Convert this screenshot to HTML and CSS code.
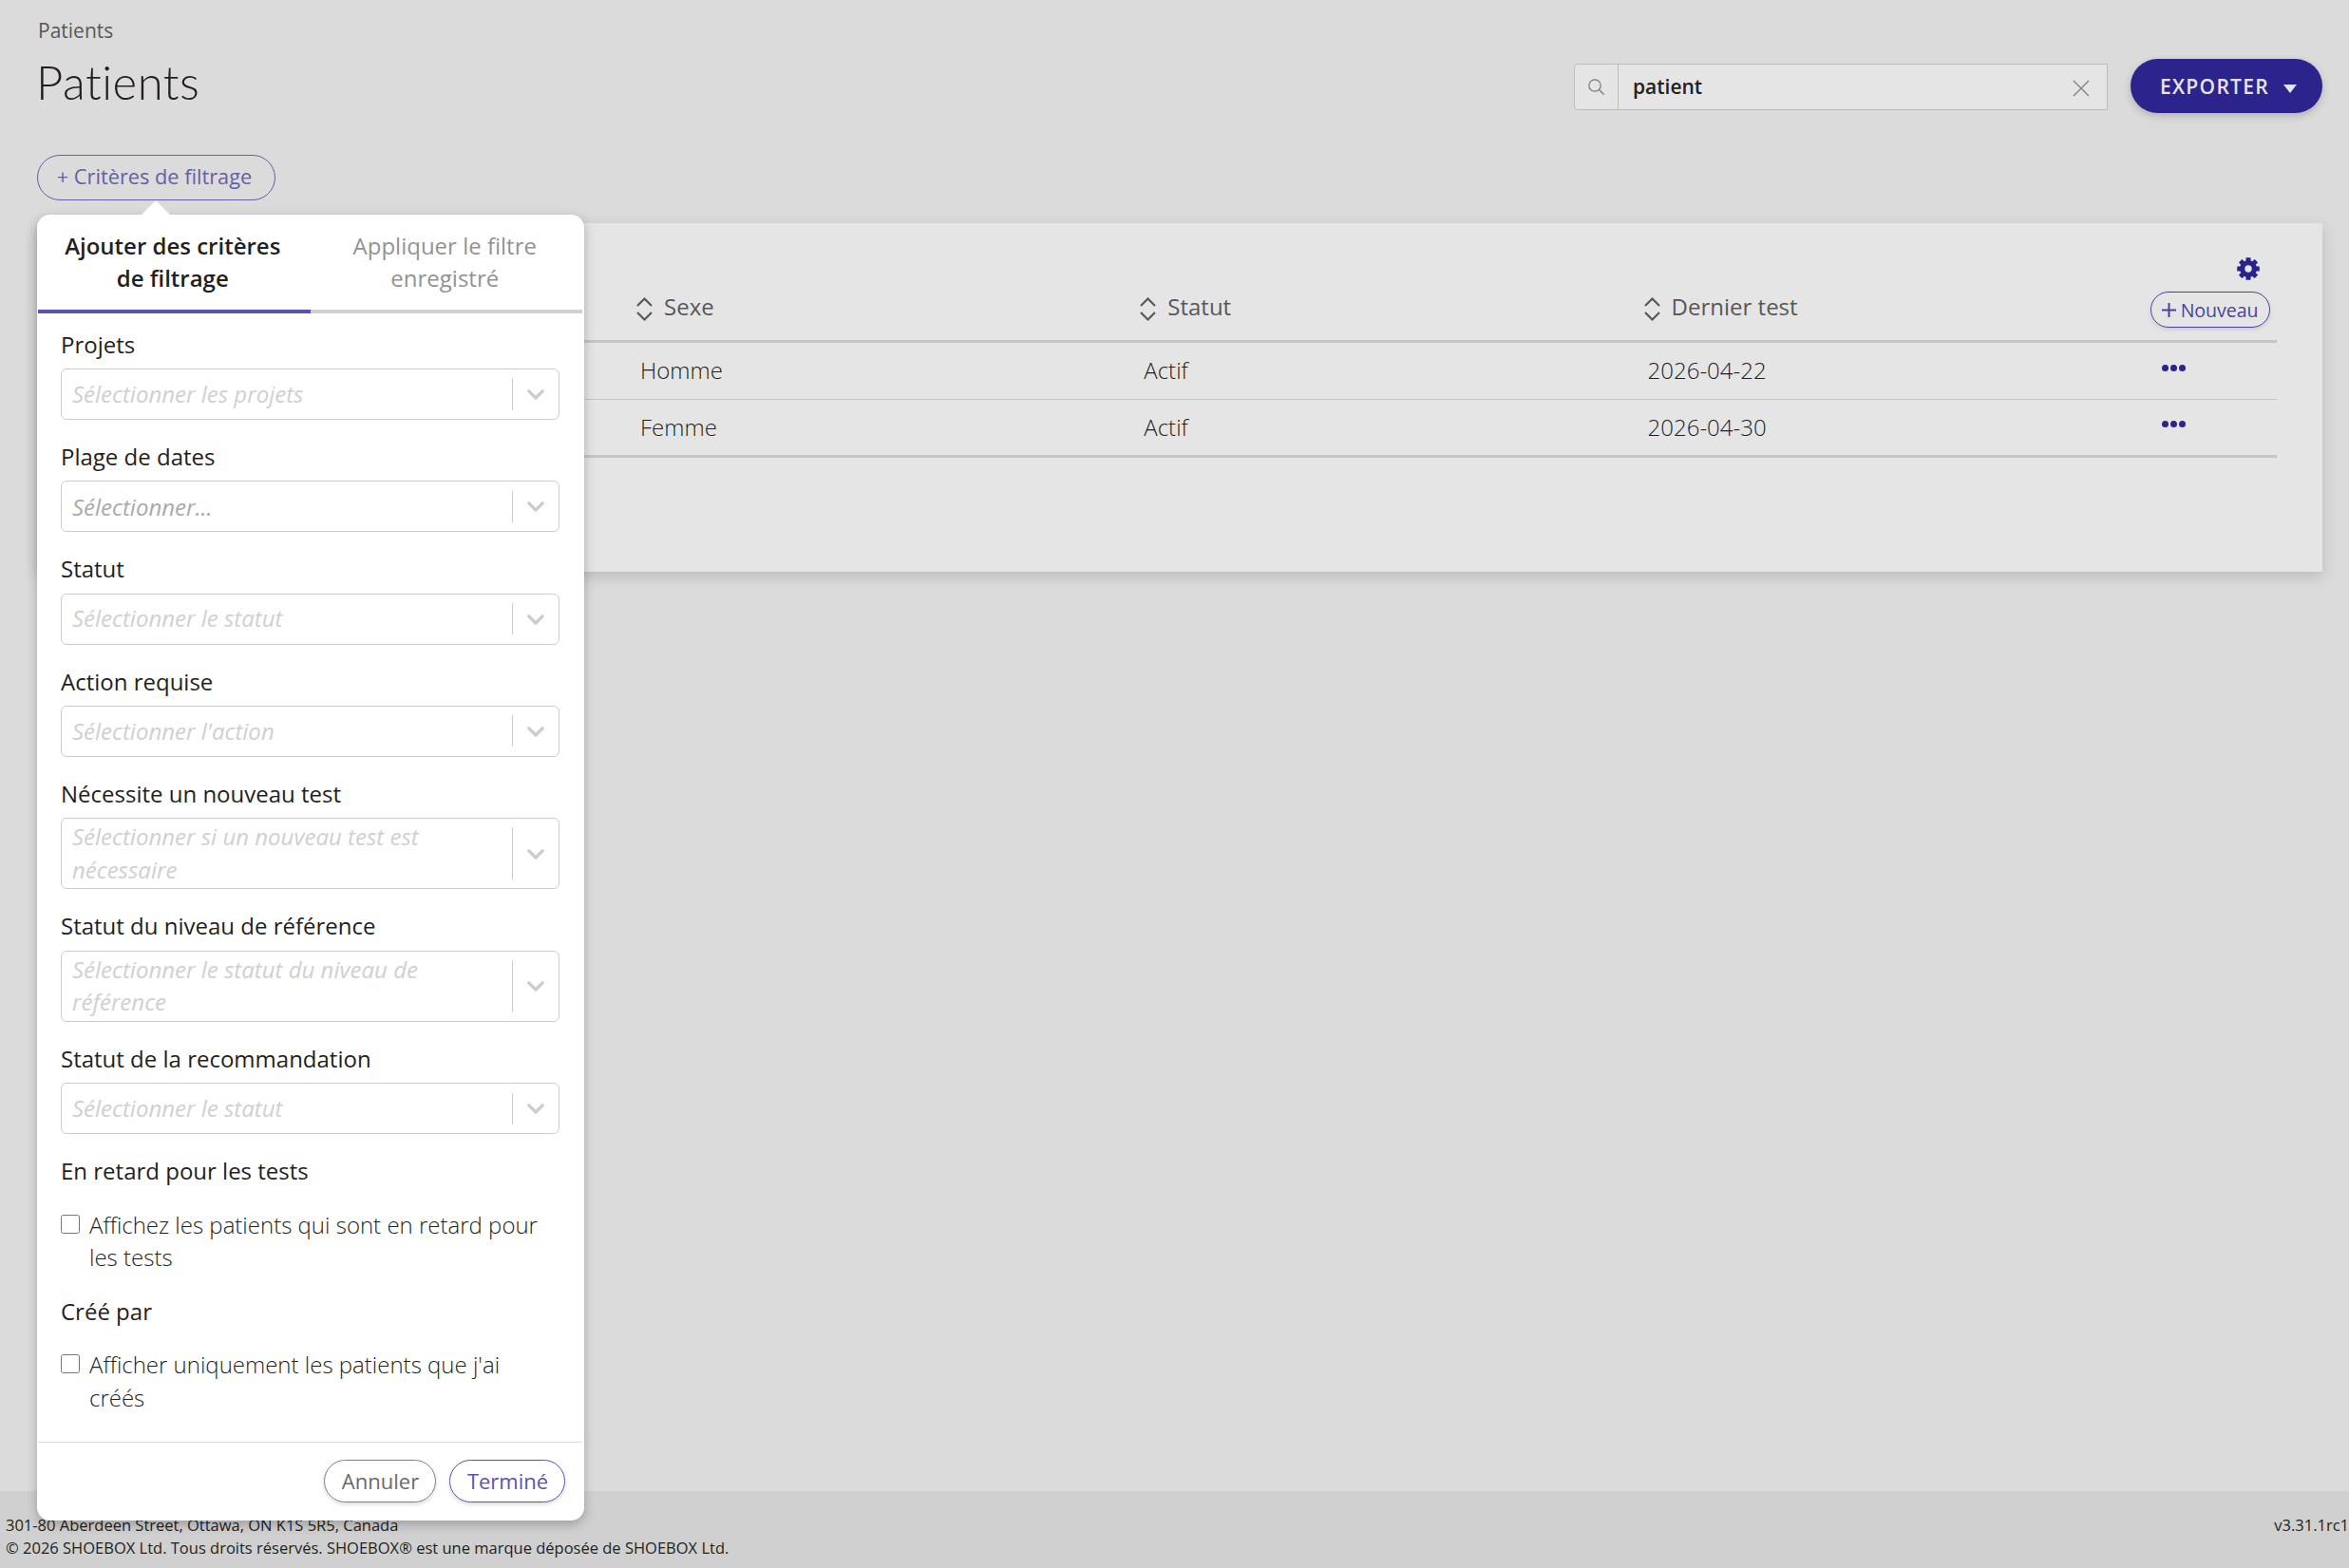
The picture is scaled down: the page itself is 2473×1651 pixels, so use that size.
FILE: index.html
```html
<!DOCTYPE html>
<html lang="fr">
<head>
  <meta charset="UTF-8">
  <meta name="viewport" content="width=device-width, initial-scale=1.0">
  <title>Patients</title>
  <link rel="stylesheet" href="styles.css">
</head>
<body>
  <main>
    <header class="page-header">
      <div>
        <div class="breadcrumb">Patients</div>
        <h1>Patients</h1>
      </div>
      <div class="tools">
        <div class="search">
          <span class="search-icon">
            <svg width="17" height="17" viewBox="0 0 17 17"><circle cx="7" cy="7" r="6.2"/><path d="M11.500 11.500l5 5"/></svg>
          </span>
          <input type="text" value="patient">
          <svg class="clear" width="18" height="18" viewBox="0 0 18 18"><path d="M1 1l16 16M17 1L1 17"/></svg>
        </div>
        <button class="btn-export">EXPORTER <span class="caret"></span></button>
      </div>
    </header>

    <div class="filter-bar">
      <button class="btn-filter">+ Critères de filtrage</button>

      <div class="popup">
        <div class="tabs">
          <div class="tab active">Ajouter des critères de filtrage</div>
          <div class="tab">Appliquer le filtre enregistré</div>
        </div>
        <div class="fields">
          <div class="field">
            <label>Projets</label>
            <div class="select"><span>Sélectionner les projets</span><i><svg viewBox="0 0 18 11"><path d="M1.800 1.800L9 9l7.200-7.200"/></svg></i></div>
          </div>
          <div class="field">
            <label>Plage de dates</label>
            <div class="select dates"><span>Sélectionner...</span><i><svg viewBox="0 0 18 11"><path d="M1.800 1.800L9 9l7.200-7.200"/></svg></i></div>
          </div>
          <div class="field">
            <label>Statut</label>
            <div class="select"><span>Sélectionner le statut</span><i><svg viewBox="0 0 18 11"><path d="M1.800 1.800L9 9l7.200-7.200"/></svg></i></div>
          </div>
          <div class="field">
            <label>Action requise</label>
            <div class="select"><span>Sélectionner l'action</span><i><svg viewBox="0 0 18 11"><path d="M1.800 1.800L9 9l7.200-7.200"/></svg></i></div>
          </div>
          <div class="field">
            <label>Nécessite un nouveau test</label>
            <div class="select"><span>Sélectionner si un nouveau test est nécessaire</span><i><svg viewBox="0 0 18 11"><path d="M1.800 1.800L9 9l7.200-7.200"/></svg></i></div>
          </div>
          <div class="field">
            <label>Statut du niveau de référence</label>
            <div class="select"><span>Sélectionner le statut du niveau de référence</span><i><svg viewBox="0 0 18 11"><path d="M1.800 1.800L9 9l7.200-7.200"/></svg></i></div>
          </div>
          <div class="field">
            <label>Statut de la recommandation</label>
            <div class="select"><span>Sélectionner le statut</span><i><svg viewBox="0 0 18 11"><path d="M1.800 1.800L9 9l7.200-7.200"/></svg></i></div>
          </div>
          <div class="field check-field">
            <label>En retard pour les tests</label>
            <div class="check"><input type="checkbox"><span>Affichez les patients qui sont en retard pour les tests</span></div>
          </div>
          <div class="field check-field">
            <label>Créé par</label>
            <div class="check"><input type="checkbox"><span>Afficher uniquement les patients que j'ai créés</span></div>
          </div>
        </div>
        <div class="popup-footer">
          <button class="btn-cancel">Annuler</button>
          <button class="btn-done">Terminé</button>
        </div>
      </div>
    </div>

    <section class="card">
      <div class="card-tools">
        <svg class="gear" width="24" height="24" viewBox="-12 -12 24 24">
          <g fill="#2a238c">
            <rect x="-2.500" y="-11.800" width="5" height="23.600" rx=".5"/>
            <rect x="-2.500" y="-11.800" width="5" height="23.600" rx=".5" transform="rotate(45)"/>
            <rect x="-2.500" y="-11.800" width="5" height="23.600" rx=".5" transform="rotate(90)"/>
            <rect x="-2.500" y="-11.800" width="5" height="23.600" rx=".5" transform="rotate(135)"/>
            <circle r="9"/>
          </g>
          <circle r="3.700" fill="#e5e5e5"/>
        </svg>
      </div>
      <div class="row head">
        <div></div>
        <div><svg class="sort" viewBox="0 0 17 25"><path d="M1 9l7.500-7.500L16 9M1 16l7.500 7.500L16 16"/></svg>Sexe</div>
        <div><svg class="sort" viewBox="0 0 17 25"><path d="M1 9l7.500-7.500L16 9M1 16l7.500 7.500L16 16"/></svg>Statut</div>
        <div><svg class="sort" viewBox="0 0 17 25"><path d="M1 9l7.500-7.500L16 9M1 16l7.500 7.500L16 16"/></svg>Dernier test</div>
        <div><button class="btn-new"><svg width="15" height="15" viewBox="0 0 15 15"><path d="M7.500 0v15M0 7.500h15"/></svg>Nouveau</button></div>
      </div>
      <div class="row">
        <div></div>
        <div>Homme</div>
        <div>Actif</div>
        <div>2026-04-22</div>
        <div class="dots"><b></b><b></b><b></b></div>
      </div>
      <div class="row">
        <div></div>
        <div>Femme</div>
        <div>Actif</div>
        <div>2026-04-30</div>
        <div class="dots"><b></b><b></b><b></b></div>
      </div>
    </section>
  </main>

  <footer>
    <div>
      <div>301-80 Aberdeen Street, Ottawa, ON K1S 5R5, Canada</div>
      <div>© 2026 SHOEBOX Ltd. Tous droits réservés. SHOEBOX® est une marque déposée de SHOEBOX Ltd.</div>
    </div>
    <div>v3.31.1rc1</div>
  </footer>
</body>
</html>
```
FILE: styles.css
```css
* {
  box-sizing: border-box;
}
body {
  margin: 0;
  height: 1651px;
  display: flex;
  flex-direction: column;
  overflow: hidden;
  background: #dbdbdb;
  font-family: "Open Sans", sans-serif;
  font-size: 24px;
  line-height: 34.28px;
  color: #231f20;
}
button {
  font-family: inherit;
  background: transparent;
  cursor: pointer;
}
svg {
  fill: none;
  flex: none;
}
main {
  flex: 1;
  padding: 0 28px 0 39px;
}
.page-header {
  display: flex;
  justify-content: space-between;
  height: 163px;
}
.breadcrumb {
  padding: 17px 0 0 1px;
  font-size: 21px;
  line-height: 30px;
  color: #58585a;
}
h1 {
  margin: 9px 0 0 -1px;
  font-family: Lato, sans-serif;
  font-weight: 300;
  font-size: 49px;
  line-height: 60px;
  letter-spacing: .5px;
  font-variant-ligatures: none;
}
.tools {
  display: flex;
  align-items: flex-start;
  gap: 24px;
  padding-top: 62px;
}
.search {
  display: flex;
  align-items: center;
  width: 562px;
  height: 49px;
  margin-top: 5px;
  padding-right: 18px;
  background: #e5e5e5;
  border: 1px solid #bcbcbc;
  border-radius: 4px 0 0 4px;
}
.search-icon {
  display: flex;
  align-items: center;
  justify-content: center;
  width: 46px;
  height: 47px;
  border-right: 1px solid #bcbcbc;
}
.search-icon svg {
  stroke: #777;
  stroke-width: 1.2;
}
.search input {
  flex: 1;
  padding: 0 0 1px 15px;
  border: 0;
  outline: none;
  background: transparent;
  font: 600 21px "Open Sans", sans-serif;
  color: #231f20;
}
.clear {
  margin-top: 3px;
  stroke: #888;
  stroke-width: 1.5;
}
.btn-export {
  display: flex;
  align-items: center;
  justify-content: center;
  gap: 15px;
  width: 202px;
  height: 57px;
  padding: 1px 0 0 4px;
  border: 0;
  border-radius: 29px;
  background: #2c248c;
  color: #e5e5e5;
  font-size: 21px;
  font-weight: 600;
  letter-spacing: 1.3px;
  box-shadow: 0 3px 8px rgba(0, 0, 0, .2);
}
.caret {
  margin-top: 4px;
  border: 7px solid transparent;
  border-top: 9px solid #e5e5e5;
  border-bottom: 0;
}

/* filtres */
.filter-bar {
  position: relative;
  height: 72px;
}
.btn-filter {
  display: block;
  width: 251px;
  height: 48px;
  padding: 0 4px 3px 0;
  border: 1px solid #6660a4;
  border-radius: 24px;
  color: #6660a4;
  font-size: 21.750px;
}
.popup {
  position: absolute;
  top: 63px;
  left: 0;
  width: 576px;
  height: 1375px;
  z-index: 10;
  display: flex;
  flex-direction: column;
  padding: 0 2px 0 1px;
  background: #fff;
  border-radius: 14px;
  box-shadow: 0 4px 12px rgba(0, 0, 0, .25);
}
.popup::before {
  content: "";
  position: absolute;
  top: -15px;
  left: 110px;
  border: 15px solid transparent;
  border-top: 0;
  border-bottom-color: #fff;
}
.tabs {
  display: flex;
}
.tab {
  flex: 1;
  height: 104px;
  padding: 16px 26px 0 23px;
  border-bottom: 4px solid #d0d0d0;
  text-align: center;
  color: #939393;
}
.tab.active {
  color: #231f20;
  font-weight: 600;
  border-bottom-color: #5b52b6;
}
.fields {
  flex: 1;
  padding: 15.700px 24px 0;
}
.field {
  margin-bottom: 22px;
}
.field label {
  display: block;
  margin-bottom: 8px;
}
.select {
  display: flex;
  align-items: center;
  min-height: 54px;
  padding: 2.400px 0;
  border: 1px solid #ccc;
  border-radius: 6px;
}
.select span {
  flex: 1;
  padding: 0 60px 0 11px;
  font-style: italic;
  color: #d0d0d0;
}
.select.dates span {
  padding-top: 2px;
  color: #aaa;
}
.select i {
  display: flex;
  align-items: center;
  align-self: stretch;
  width: 49px;
  margin: 7px 0;
  padding: 1px 0 0 15px;
  border-left: 1px solid #ccc;
}
.select svg {
  width: 18px;
  height: 11px;
  stroke: #ccc;
  stroke-width: 3.300;
  stroke-linecap: round;
}
.check-field label {
  margin-bottom: 22.500px;
}
.check {
  display: flex;
  font-weight: 300;
}
.check input {
  width: 20px;
  height: 20px;
  margin: 6px 10px 0 0;
  flex: none;
}
.popup-footer {
  display: flex;
  justify-content: flex-end;
  gap: 14px;
  height: 83px;
  padding: 18px 18px 0;
  border-top: 1px solid #ddd;
}
.popup-footer button {
  height: 45px;
  padding: 0 0 2px 1px;
  border: 1px solid;
  border-radius: 23px;
  font-size: 22px;
  box-shadow: 0 2px 4px rgba(0, 0, 0, .15);
}
.popup-footer .btn-cancel {
  width: 118px;
  border-color: #808080;
  color: #6a6a6a;
}
.btn-done {
  width: 122px;
  color: #5b52b6;
}

/* liste */
.card {
  height: 367px;
  padding: 0 48px;
  background: #e5e5e5;
  box-shadow: 0 5px 15px rgba(0, 0, 0, .15);
}
.card-tools {
  display: flex;
  justify-content: flex-end;
  height: 61px;
  padding: 36px 18px 0 0;
}
.row {
  display: grid;
  grid-template-columns: 579px 530.300px 530.300px 530px 1fr;
  align-items: center;
  height: 60px;
  padding-left: 8px;
  border-bottom: 1px solid #c5c5c5;
  font-weight: 300;
}
.row:last-child {
  height: 61px;
  border-bottom-width: 3px;
}
.head {
  height: 65px;
  border-bottom-width: 3px;
  font-weight: 400;
  color: #58585a;
}
.head > div {
  display: flex;
  align-items: center;
  padding-bottom: 8px;
}
.head > div:last-child {
  padding-bottom: 2px;
}
.sort {
  width: 17px;
  height: 25px;
  margin: 4px 12px 0 -4px;
  stroke: #58585a;
  stroke-width: 2.200;
}
.btn-new {
  display: flex;
  align-items: center;
  justify-content: center;
  gap: 5px;
  width: 126px;
  height: 38px;
  padding: 0;
  margin-left: -1px;
  border: 1px solid #4a429c;
  border-radius: 19px;
  color: #4a429c;
  font-size: 19.500px;
  box-shadow: 0 2px 4px rgba(0, 0, 0, .12);
}
.btn-new svg {
  stroke: #4a429c;
  stroke-width: 2;
}
.dots {
  display: flex;
  gap: 2px;
  padding: 0 0 7px 11px;
}
.dots b {
  width: 7px;
  height: 7px;
  border-radius: 50%;
  background: #2c248c;
}

footer {
  display: flex;
  justify-content: space-between;
  height: 81px;
  padding: 24px 0 0 6px;
  background: #d0d0d0;
  font-size: 16.500px;
  line-height: 24px;
}
```
